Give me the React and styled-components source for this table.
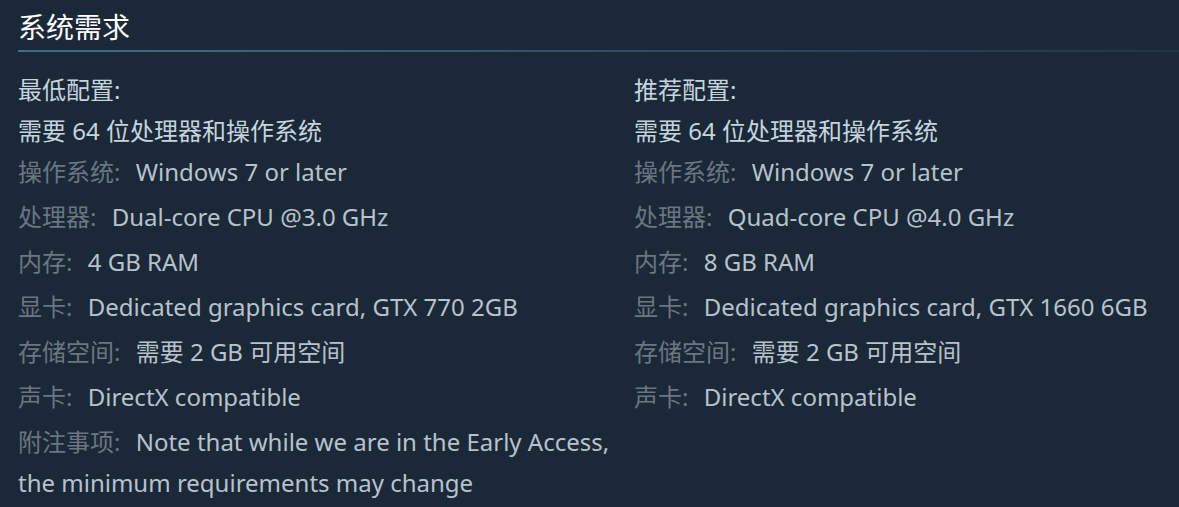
import React from 'react'
import styled, { createGlobalStyle } from 'styled-components';

const GlobalStyle = createGlobalStyle`
  html, body {
    margin: 0;
    padding: 0;
    background: #1b2838;
  }
  body {
    font-family: "Noto Sans", "Noto Sans CJK SC", sans-serif;
  }
`;

const minimum = [
  { label: '操作系统:', value: 'Windows 7 or later' },
  { label: '处理器:', value: 'Dual-core CPU @3.0 GHz' },
  { label: '内存:', value: '4 GB RAM' },
  { label: '显卡:', value: 'Dedicated graphics card, GTX 770 2GB' },
  { label: '存储空间:', value: '需要 2 GB 可用空间' },
  { label: '声卡:', value: 'DirectX compatible' },
  { label: '附注事项:', value: 'Note that while we are in the Early Access, the minimum requirements may change' },
];

const recommended = [
  { label: '操作系统:', value: 'Windows 7 or later' },
  { label: '处理器:', value: 'Quad-core CPU @4.0 GHz' },
  { label: '内存:', value: '8 GB RAM' },
  { label: '显卡:', value: 'Dedicated graphics card, GTX 1660 6GB' },
  { label: '存储空间:', value: '需要 2 GB 可用空间' },
  { label: '声卡:', value: 'DirectX compatible' },
];

const ReqColumn = ({ title, items }) => (
  <Column>
    <ColTitle>{title}</ColTitle>
    <ReqList>
      <Bits>需要 64 位处理器和操作系统</Bits>
      {items.map((it) => (
        <ReqItem key={it.label}>
          <Label>{it.label}</Label> {it.value}
        </ReqItem>
      ))}
    </ReqList>
  </Column>
);

const App = () => {
  return (
    <>
      <GlobalStyle />
      <Section>
        <Heading>系统需求</Heading>
        <Columns>
          <ReqColumn title="最低配置:" items={minimum} />
          <ReqColumn title="推荐配置:" items={recommended} />
        </Columns>
      </Section>
    </>
  )
}

const Section = styled.div`
  width: 1179px;
  height: 507px;
  overflow: hidden;
  padding: 0 0 0 18px;
  box-sizing: border-box;
  background: #1b2838;
`;

const Heading = styled.h2`
  margin: 0;
  padding-top: 8px;
  height: 42px;
  box-sizing: content-box;
  font-size: 28px;
  line-height: 38px;
  font-weight: normal;
  color: #ffffff;
  border-bottom: 2px solid transparent;
  border-image: linear-gradient(to right, #3c6f90 0%, #2b4a63 60%, #223447 100%) 1;
  width: 1161px;
`;

const Columns = styled.div`
  display: grid;
  grid-template-columns: 616px 1fr;
  padding-top: 18px;
`;

const Column = styled.div`
  display: flex;
  flex-direction: column;
`;

const ColTitle = styled.div`
  font-size: 24px;
  line-height: 40px;
  color: #c6d4df;
`;

const ReqList = styled.ul`
  list-style: none;
  margin: 0;
  padding: 0;
  font-size: 24px;
  line-height: 41px;
  color: #b8c2cc;
`;

const Bits = styled.li`
  color: #c6d4df;
`;

const ReqItem = styled.li`
  margin-bottom: 4px;
`;

const Label = styled.span`
  color: #6b7682;
  margin-right: 9px;
`;

export default App
